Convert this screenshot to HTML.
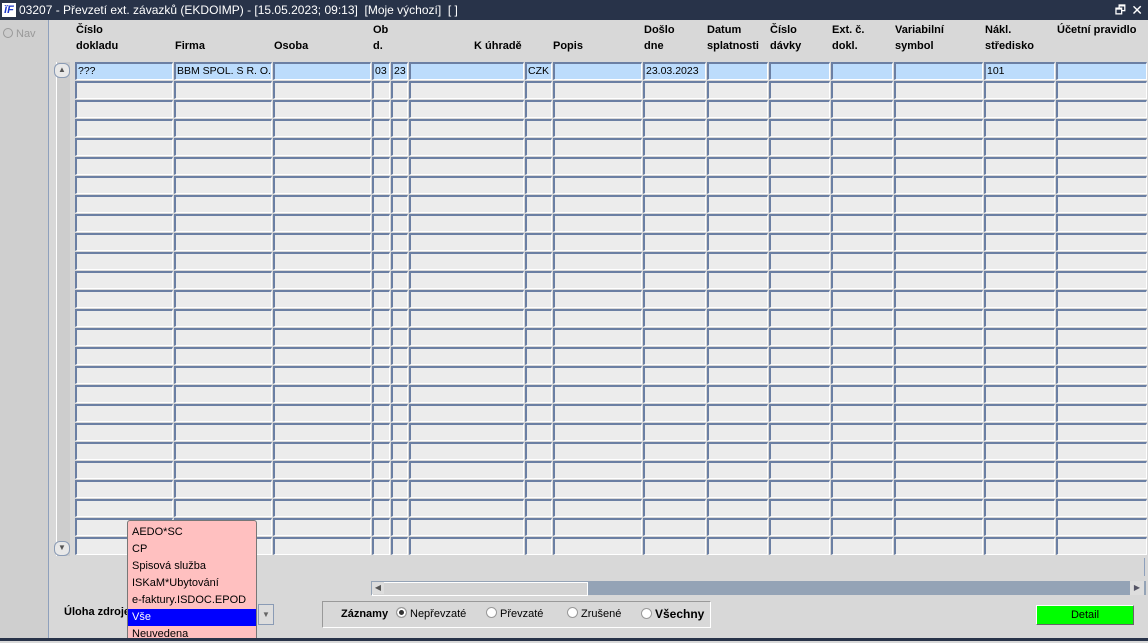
<!DOCTYPE html>
<html><head><meta charset="utf-8"><style>
body{margin:0;width:1148px;height:641px;overflow:hidden;background:#d8d8d8;font-family:"Liberation Sans",Arial,sans-serif;font-size:11px;position:relative}
.a{position:absolute}
#title{left:0;top:0;width:1148px;height:20px;background:#283349;color:#fff;font-size:12px;line-height:20px}
.h{position:absolute;font-weight:bold;font-size:11px;line-height:16px;color:#000}
.c{position:absolute;box-sizing:border-box;height:18px;background:#ececec;border-top:2px solid #6b7fa3;border-left:2px solid #6b7fa3;border-right:1px solid #fff;border-bottom:1px solid #fff;font-size:10.5px;line-height:15px;padding-left:1px;white-space:nowrap;overflow:hidden}
.r0{background:#bcdcfc}
.dd div{height:17px;line-height:17px;padding-left:4px;font-size:11px}
.rad{display:inline-block;width:9px;height:9px;border-radius:50%;background:#fff;border:1px solid #999;vertical-align:-1px;margin-right:3px}
</style></head><body>
<div id="title" class="a"><span style="display:inline-block;background:#fff;color:#1a35c9;font-weight:bold;font-style:italic;width:14px;height:14px;line-height:14px;text-align:center;margin:3px 3px 0 2px;vertical-align:top;font-size:11px">ĭF</span>03207 - Převzetí ext. závazků (EKDOIMP) - [15.05.2023; 09:13]&nbsp; [Moje výchozí]&nbsp; [ ]<span style="position:absolute;right:22px;top:0">🗗</span><span style="position:absolute;right:5px;top:0;font-size:14px">✕</span></div>
<div class="a" style="left:0;top:20px;width:48px;height:618px;background:#cfcfcf;border-right:1px solid #8ea0bc"></div>
<div class="a" style="left:3px;top:28px;color:#999;font-size:11px"><span class="rad" style="background:#ccc;width:8px;height:8px"></span>Nav</div>
<div class="h" style="left:76px;top:22px">Číslo<br>dokladu</div>
<div class="h" style="left:175px;top:38px">Firma</div>
<div class="h" style="left:274px;top:38px">Osoba</div>
<div class="h" style="left:373px;top:22px">Ob<br>d.</div>
<div class="h" style="left:474px;top:38px">K úhradě</div>
<div class="h" style="left:553px;top:38px">Popis</div>
<div class="h" style="left:644px;top:22px">Došlo<br>dne</div>
<div class="h" style="left:707px;top:22px">Datum<br>splatnosti</div>
<div class="h" style="left:770px;top:22px">Číslo<br>dávky</div>
<div class="h" style="left:832px;top:22px">Ext. č.<br>dokl.</div>
<div class="h" style="left:895px;top:22px">Variabilní<br>symbol</div>
<div class="h" style="left:985px;top:22px">Nákl.<br>středisko</div>
<div class="h" style="left:1057px;top:22px">Účetní pravidlo</div>
<div class="a" style="left:56px;top:62px;width:13px;height:494px;background:#cdcdcd;border-left:1px solid #fff"></div>
<div class="a" style="left:54px;top:63px;width:14px;height:13px;border:1px solid #8a9bb5;border-radius:6px;background:#e8e8e8;font-size:8px;text-align:center;line-height:12px;color:#555">▲</div>
<div class="a" style="left:54px;top:541px;width:14px;height:13px;border:1px solid #8a9bb5;border-radius:6px;background:#e8e8e8;font-size:8px;text-align:center;line-height:12px;color:#555">▼</div>
<div id="grid"></div>
<div class="a" style="left:371px;top:581px;width:775px;height:14px;background:#94a3b6"></div>
<div class="a" style="left:372px;top:582px;width:214px;height:12px;background:#d4d4d4;border:1px solid #fff"></div>
<div class="a" style="left:372px;top:582px;width:12px;height:12px;background:#ddd;font-size:8px;line-height:12px;text-align:center;color:#555">◀</div>
<div class="a" style="left:1130px;top:581px;width:14px;height:14px;background:#ddd;font-size:8px;line-height:14px;text-align:center;color:#556">▶</div>
<div class="a" style="left:1144px;top:558px;width:1px;height:18px;background:#8ea0bc"></div>
<div class="a" style="left:64px;top:606px;font-weight:bold;font-size:11px">Úloha zdroje</div>
<div class="a" style="left:258px;top:604px;width:14px;height:19px;background:#ddd;border:1px solid #8a9bb5;font-size:8px;line-height:19px;text-align:center;color:#666">▼</div>
<div class="a dd" style="left:127px;top:520px;width:130px;height:121px;background:#ffc0c0;border:1px solid #777;border-radius:3px;box-sizing:border-box;padding-top:3px">
<div>AEDO*SC</div><div>CP</div><div>Spisová služba</div><div>ISKaM*Ubytování</div><div>e-faktury.ISDOC.EPOD</div><div style="background:#0000ff;color:#fff">Vše</div><div>Neuvedena</div></div>
<div class="a" style="left:322px;top:601px;width:389px;height:27px;box-sizing:border-box;border:1px solid #999;border-right-color:#fff;border-bottom-color:#fff;font-size:11px;line-height:25px">
<b style="position:absolute;left:18px">Záznamy</b>
<span style="position:absolute;left:73px"><span class="rad" style="background:#333;box-shadow:inset 0 0 0 2px #fff"></span>Nepřevzaté</span>
<span style="position:absolute;left:163px"><span class="rad"></span>Převzaté</span>
<span style="position:absolute;left:244px"><span class="rad"></span>Zrušené</span>
<span style="position:absolute;left:318px"><span class="rad"></span><b style="font-size:12px">Všechny</b></span></div>
<div class="a" style="left:1036px;top:605px;width:96px;height:18px;background:#00ff00;border:1px solid #fff;border-right-color:#666;border-bottom-color:#666;text-align:center;line-height:18px;font-size:11px">Detail</div>
<div class="a" style="left:0;top:638px;width:1148px;height:3px;background:#283349"></div>
<script>
var cols=[[75,172],[174,271],[273,370],[372,389],[391,407],[409,523],[525,551],[553,641],[643,705],[707,767],[769,829],[831,892],[894,982],[984,1054],[1056,1146]];
var t0=["???","BBM SPOL. S R. O.","","03","23","","CZK","","23.03.2023","","","","","101",""];
var h="";
for(var r=0;r<26;r++){for(var i=0;i<cols.length;i++){var y=62+r*19;h+='<div class="c'+(r==0?' r0':'')+'" style="left:'+cols[i][0]+'px;top:'+y+'px;width:'+(cols[i][1]-cols[i][0]+1)+'px">'+(r==0?t0[i]:'')+'</div>';}}
document.getElementById('grid').innerHTML=h;
</script>
</body></html>
